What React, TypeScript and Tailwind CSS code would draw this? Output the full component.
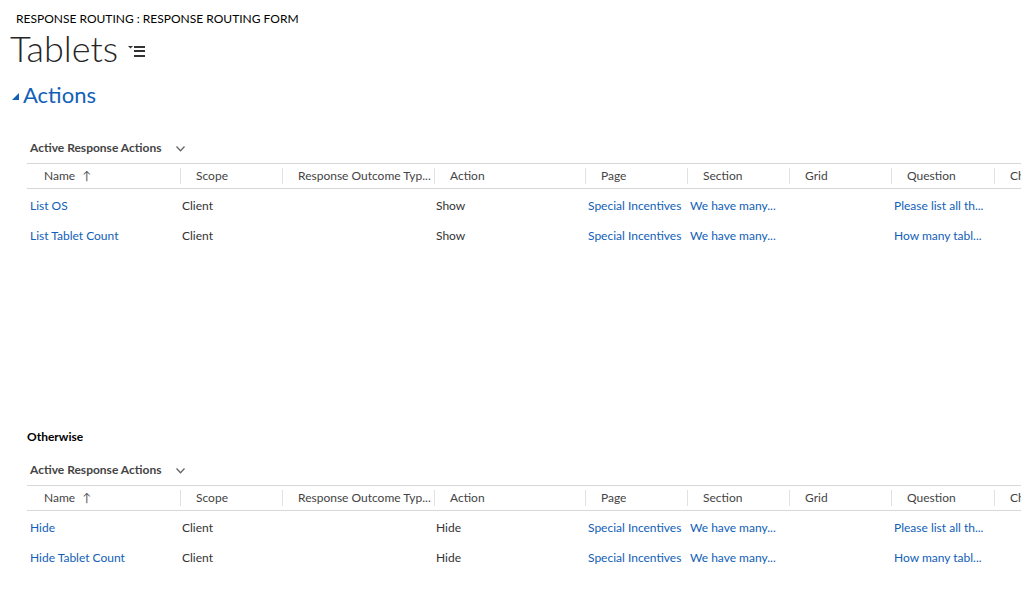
import React from "react";

type Row = {
  name: string;
  scope: string;
  action: string;
  page: string;
  section: string;
  question: string;
};

const columns = [
  { label: "Name", w: "w-[153px]", sort: true },
  { label: "Scope", w: "w-[102px]" },
  { label: "Response Outcome Typ...", w: "w-[152px]" },
  { label: "Action", w: "w-[151px]" },
  { label: "Page", w: "w-[102px]" },
  { label: "Section", w: "w-[102px]" },
  { label: "Grid", w: "w-[102px]" },
  { label: "Question", w: "w-[103px]" },
  { label: "Ch", w: "w-[103px]" },
];

const showRows: Row[] = [
  { name: "List OS", scope: "Client", action: "Show", page: "Special Incentives", section: "We have many...", question: "Please list all th..." },
  { name: "List Tablet Count", scope: "Client", action: "Show", page: "Special Incentives", section: "We have many...", question: "How many tabl..." },
];

const hideRows: Row[] = [
  { name: "Hide", scope: "Client", action: "Hide", page: "Special Incentives", section: "We have many...", question: "Please list all th..." },
  { name: "Hide Tablet Count", scope: "Client", action: "Hide", page: "Special Incentives", section: "We have many...", question: "How many tabl..." },
];

function Chevron() {
  return (
    <svg width="9" height="6" viewBox="0 0 9 6" className="ml-[15px] mt-[1px]">
      <path d="M0.5 0.5 L4.5 4.8 L8.5 0.5" fill="none" stroke="#666" strokeWidth="1.3" />
    </svg>
  );
}

function SubGrid({ rows }: { rows: Row[] }) {
  return (
    <div className="ml-[27px]">
      <div className="flex items-center h-[22px] pl-[3px] text-[12px] font-bold text-[#444]">
        Active Response Actions
        <Chevron />
      </div>
      <div className="mt-[4px] flex h-[26px] border-y border-[#d8d8d8] overflow-hidden whitespace-nowrap">
        {columns.map((c, i) => (
          <div key={c.label} className={`${c.w} shrink-0 flex items-center`}>
            {i > 0 && <div className="w-px h-[16px] bg-[#e1e1e1]" />}
            <span className={`${i > 0 ? "pl-[15px]" : "pl-[17px]"} text-[12px] text-[#444] flex items-center`}>
              {c.label}
              {c.sort && <span className="ml-[7px] text-[12px] text-[#555]">↑</span>}
            </span>
          </div>
        ))}
      </div>
      <div className="mt-[2px] text-[12px] whitespace-nowrap">
        {rows.map((r) => (
          <div key={r.name} className="flex h-[30px] items-center">
            <div className="w-[153px] shrink-0 pl-[3px] text-[#1160b7]">{r.name}</div>
            <div className="w-[102px] shrink-0 pl-[2px] text-[#333]">{r.scope}</div>
            <div className="w-[152px] shrink-0" />
            <div className="w-[151px] shrink-0 pl-[2px] text-[#333]">{r.action}</div>
            <div className="w-[102px] shrink-0 pl-[3px] text-[#1160b7]">{r.page}</div>
            <div className="w-[102px] shrink-0 pl-[3px] text-[#1160b7]">{r.section}</div>
            <div className="w-[102px] shrink-0" />
            <div className="w-[103px] shrink-0 pl-[3px] text-[#1160b7]">{r.question}</div>
          </div>
        ))}
      </div>
    </div>
  );
}

export default function App() {
  return (
    <div className="w-[1021px] h-[596px] overflow-hidden bg-white font-['Segoe_UI','Lato',sans-serif] text-[#000]">
      <div className="pl-[16px] pt-[11px] text-[12px] leading-[16px] text-[#000]">
        RESPONSE ROUTING : RESPONSE ROUTING FORM
      </div>
      <div className="flex items-center pl-[10px] h-[38px] mt-[2px]">
        <span className="text-[36px] font-light leading-[38px] text-[#262626]">Tablets</span>
        <svg width="18" height="12" viewBox="0 0 18 12" className="ml-[10px] mt-[6px]">
          <path d="M0 1 L5 1 L2.5 3.5 Z" fill="#333" />
          <rect x="6" y="1" width="11" height="2" fill="#333" />
          <rect x="6" y="5" width="11" height="2" fill="#333" />
          <rect x="6" y="10" width="11" height="2" fill="#333" />
        </svg>
      </div>
      <div className="flex items-center pl-[12px] mt-[13px] h-[30px]">
        <svg width="7" height="7" viewBox="0 0 7 7" className="mt-[3px]">
          <path d="M7 0 L7 7 L0 7 Z" fill="#1160b7" />
        </svg>
        <span className="ml-[4px] text-[22px] leading-[30px] text-[#1160b7]">Actions</span>
      </div>
      <div className="mt-[27px]">
        <SubGrid rows={showRows} />
      </div>
      <div className="mt-[177px] pl-[27px] h-[18px] flex items-center text-[12px] font-bold text-[#000]">
        Otherwise
      </div>
      <div className="mt-[13px]">
        <SubGrid rows={hideRows} />
      </div>
    </div>
  );
}
